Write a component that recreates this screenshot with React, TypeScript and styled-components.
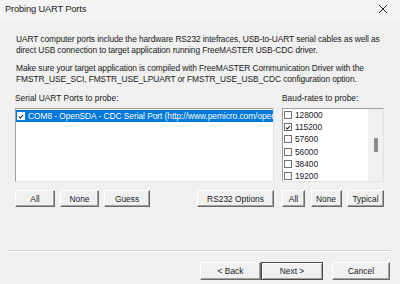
import React from "react";
import styled, { createGlobalStyle } from "styled-components";

const GlobalStyle = createGlobalStyle`
  html, body {
    margin: 0;
    padding: 0;
    background: #f0f0f0;
  }
  * {
    box-sizing: border-box;
  }
`;

const ports = [
  { name: "COM8 - OpenSDA - CDC Serial Port (http://www.pemicro.com/opensda)", checked: true },
];

const bauds = [
  { rate: "128000", checked: false },
  { rate: "115200", checked: true },
  { rate: "57600", checked: false },
  { rate: "56000", checked: false },
  { rate: "38400", checked: false },
  { rate: "19200", checked: false },
];

const CheckMark: React.FC = () => (
  <svg width="7" height="7" viewBox="0 0 7 7">
    <path d="M1 3.5 L2.8 5.3 L6 1.5" fill="none" stroke="#111" strokeWidth="1.2" />
  </svg>
);

const App: React.FC = () => {
  return (
    <Window>
      <GlobalStyle />
      <TitleBar>
        <Title>Probing UART Ports</Title>
        <CloseButton>
          <svg width="10" height="10" viewBox="0 0 10 10">
            <path d="M1 1 L9 9 M9 1 L1 9" stroke="#222" strokeWidth="1" />
          </svg>
        </CloseButton>
      </TitleBar>

      <Body>
        <Intro>
          <Paragraph>
            <Line>UART computer ports include the hardware RS232 intefraces, USB-to-UART serial cables as well as</Line>
            <Line>direct USB connection to target application running FreeMASTER USB-CDC driver.</Line>
          </Paragraph>
          <Paragraph>
            <Line>Make sure your target application is compiled with FreeMASTER Communication Driver with the</Line>
            <Line>FMSTR_USE_SCI, FMSTR_USE_LPUART or FMSTR_USE_USB_CDC configuration option.</Line>
          </Paragraph>
        </Intro>

        <Panels>
          <PortsColumn>
            <Label>Serial UART Ports to probe:</Label>
            <ListBox>
              {ports.map((p) => (
                <PortRow key={p.name} selected>
                  <CheckBox light>{p.checked && <CheckMark />}</CheckBox>
                  <RowText>{p.name}</RowText>
                </PortRow>
              ))}
            </ListBox>
            <ButtonRow>
              <ButtonGroup>
                <Button width={40}>All</Button>
                <Button width={39}>None</Button>
                <Button width={46}>Guess</Button>
              </ButtonGroup>
              <Button width={77}>RS232 Options</Button>
            </ButtonRow>
          </PortsColumn>

          <BaudColumn>
            <Label>Baud-rates to probe:</Label>
            <ListBox>
              <BaudItems>
                {bauds.map((b) => (
                  <BaudRow key={b.rate}>
                    <CheckBox>{b.checked && <CheckMark />}</CheckBox>
                    <RowText>{b.rate}</RowText>
                  </BaudRow>
                ))}
              </BaudItems>
              <ScrollTrack>
                <ScrollThumb />
              </ScrollTrack>
            </ListBox>
            <ButtonRow>
              <Button width={23}>All</Button>
              <Button width={31}>None</Button>
              <Button width={37}>Typical</Button>
            </ButtonRow>
          </BaudColumn>
        </Panels>
      </Body>

      <Footer>
        <Separator />
        <FooterButtons>
          <Button width={61} tall>&lt; Back</Button>
          <Button width={62} tall primary>Next &gt;</Button>
          <Spacer />
          <Button width={58} tall>Cancel</Button>
        </FooterButtons>
      </Footer>
    </Window>
  );
};

export default App;

const Window = styled.div`
  width: 400px;
  height: 284px;
  display: flex;
  flex-direction: column;
  background: #f0f0f0;
  font-family: "Liberation Sans", Arial, sans-serif;
  font-size: 8.4px;
  color: #1a1a1a;
  overflow: hidden;
`;

const TitleBar = styled.div`
  height: 20px;
  display: flex;
  align-items: center;
  justify-content: space-between;
  padding: 0 12px 2px 5px;
  background: #f3f3f3;
`;

const Title = styled.div`
  font-size: 9.3px;
  letter-spacing: -0.15px;
  color: #1a1a1a;
`;

const CloseButton = styled.div`
  display: flex;
  align-items: center;
  justify-content: center;
`;

const Body = styled.div`
  display: flex;
  flex-direction: column;
  padding: 14px 16px 0 15px;
`;

const Intro = styled.div`
  display: flex;
  flex-direction: column;
  gap: 7px;
  padding-left: 1px;
`;

const Paragraph = styled.p`
  margin: 0;
  line-height: 11px;
  letter-spacing: -0.09px;
`;

const Line = styled.span`
  display: block;
  white-space: nowrap;
`;

const Panels = styled.div`
  display: flex;
  gap: 8px;
  margin-top: 8px;
`;

const PortsColumn = styled.div`
  width: 259px;
  display: flex;
  flex-direction: column;
`;

const BaudColumn = styled.div`
  width: 102px;
  display: flex;
  flex-direction: column;
`;

const Label = styled.div`
  line-height: 11px;
  margin-bottom: 4px;
`;

const ListBox = styled.div`
  height: 74px;
  display: flex;
  background: #fff;
  border: 1px solid;
  border-color: #a0a0a0 #e3e3e3 #e3e3e3 #a0a0a0;
  overflow: hidden;
  flex-direction: row;
  align-items: flex-start;
`;

const PortRow = styled.div<{ selected?: boolean }>`
  flex: 1;
  min-width: 0;
  height: 12px;
  margin-top: 1px;
  display: flex;
  align-items: center;
  gap: 3px;
  padding-left: 1px;
  white-space: nowrap;
  overflow: hidden;
  background: ${(p) => (p.selected ? "#0078d7" : "transparent")};
  color: ${(p) => (p.selected ? "#fff" : "#1a1a1a")};
`;

const RowText = styled.span`
  line-height: 12px;
  letter-spacing: -0.05px;
`;

const CheckBox = styled.span<{ light?: boolean }>`
  width: 8px;
  height: 8px;
  flex: none;
  display: flex;
  align-items: center;
  justify-content: center;
  background: #fff;
  border: 1px solid ${(p) => (p.light ? "#fff" : "#707070")};
`;

const BaudItems = styled.div`
  flex: 1;
  display: flex;
  flex-direction: column;
  padding-left: 1px;
`;

const BaudRow = styled.div`
  height: 12.2px;
  display: flex;
  align-items: center;
  gap: 3px;
  flex: none;
`;

const ScrollTrack = styled.div`
  width: 15px;
  align-self: stretch;
  background: #f0f0f0;
  display: flex;
  justify-content: center;
`;

const ScrollThumb = styled.div`
  width: 4px;
  height: 14px;
  margin-top: 29px;
  background: #8a8a8a;
  border-radius: 1px;
`;

const ButtonRow = styled.div`
  display: flex;
  justify-content: space-between;
  margin-top: 8px;
`;

const ButtonGroup = styled.div`
  display: flex;
  gap: 5px;
`;

const Button = styled.button<{ width: number; tall?: boolean; primary?: boolean }>`
  width: ${(p) => p.width}px;
  height: ${(p) => (p.tall ? 18 : 17)}px;
  padding: 0;
  font-family: inherit;
  font-size: 8.4px;
  color: #1a1a1a;
  background: #f0f0f0;
  border: 1px solid;
  border-color: ${(p) =>
    p.primary ? "#4a4a4a" : "#ffffff #6a6a6a #6a6a6a #ffffff"};
  box-shadow: ${(p) =>
    p.primary
      ? "inset 1px 1px 0 #fff, inset -1px -1px 0 #a0a0a0"
      : "inset -1px -1px 0 #a0a0a0"};
`;

const Footer = styled.div`
  margin-top: auto;
  display: flex;
  flex-direction: column;
  padding: 0 10px 4px 7px;
`;

const Separator = styled.div`
  height: 2px;
  border-top: 1px solid #d4d4d4;
  border-bottom: 1px solid #ffffff;
`;

const FooterButtons = styled.div`
  display: flex;
  justify-content: flex-end;
  margin-top: 10px;
`;

const Spacer = styled.div`
  width: 9px;
`;
